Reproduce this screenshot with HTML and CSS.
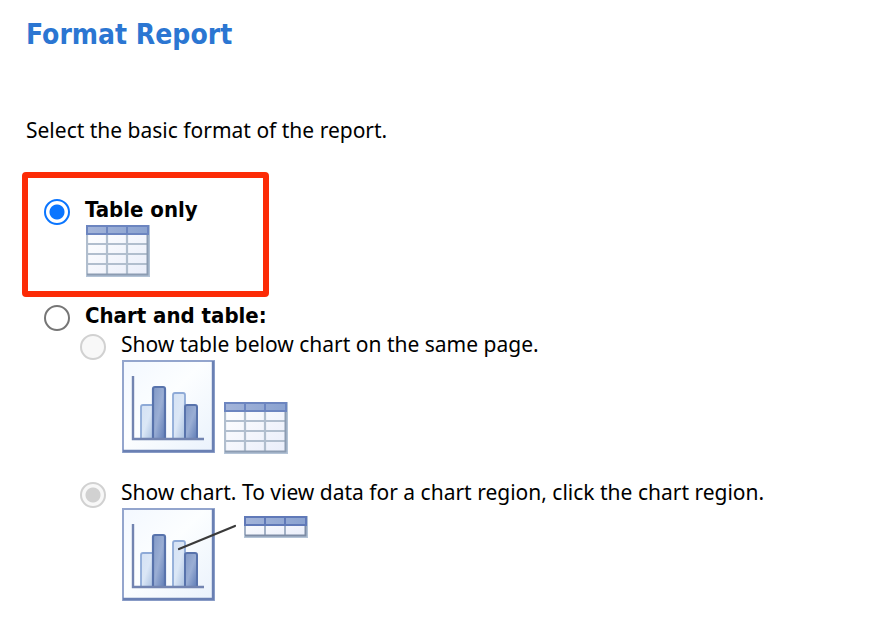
FILE: index.html
```html
<!DOCTYPE html>
<html lang="en">
<head>
  <meta charset="UTF-8" />
  <meta name="viewport" content="width=device-width, initial-scale=1.0"/>
  <title>Format Report</title>
  <link rel="stylesheet" href="styles.css">
</head>
<body>
  <svg class="defs" width="0" height="0" aria-hidden="true">
    <defs>
      <linearGradient id="paper" x1="0" y1="0" x2="1" y2="1">
        <stop offset="0" stop-color="#f3f8ff"/>
        <stop offset="0.45" stop-color="#fcfeff"/>
        <stop offset="1" stop-color="#eaf2fc"/>
      </linearGradient>
      <linearGradient id="cells" x1="0" y1="0" x2="1" y2="1">
        <stop offset="0" stop-color="#ffffff"/>
        <stop offset="1" stop-color="#eaeefa"/>
      </linearGradient>
      <linearGradient id="head" x1="0" y1="0" x2="1" y2="0">
        <stop offset="0" stop-color="#a3b4d9"/>
        <stop offset="1" stop-color="#8aa2d0"/>
      </linearGradient>
      <linearGradient id="lightBar" x1="0" y1="0" x2="1" y2="1">
        <stop offset="0" stop-color="#d5e2f4"/>
        <stop offset="0.5" stop-color="#dbe7f6"/>
        <stop offset="1" stop-color="#a9c0e0"/>
      </linearGradient>
      <linearGradient id="darkBar" x1="0" y1="0" x2="1" y2="1">
        <stop offset="0" stop-color="#8299c6"/>
        <stop offset="0.5" stop-color="#9aaed4"/>
        <stop offset="1" stop-color="#5f7cb6"/>
      </linearGradient>
    </defs>

    <symbol id="icon-chart" viewBox="0 0 94 94">
      <rect x="2" y="2" width="91" height="91" fill="#b9c3da"/>
      <rect x="1" y="1" width="91" height="91" fill="url(#paper)" stroke="#93a5cd" stroke-width="2"/>
      <path d="M91 1v90H1" fill="none" stroke="#6a80b3" stroke-width="2.4"/>
      <path d="M19 79V47q0-2 2-2h10v34z" fill="url(#lightBar)" stroke="#8eaad7" stroke-width="1.8"/>
      <path d="M31 79V29q0-2 2-2h8q2 0 2 2v50z" fill="url(#darkBar)" stroke="#5873ac" stroke-width="2.2"/>
      <path d="M51 79V35q0-2 2-2h8q2 0 2 2v44z" fill="url(#lightBar)" stroke="#8eaad7" stroke-width="1.8"/>
      <path d="M63 79V47q0-2 2-2h8q2 0 2 2v32z" fill="url(#darkBar)" stroke="#5873ac" stroke-width="2"/>
      <path d="M11 16v63h71" fill="none" stroke="#7284b1" stroke-width="2.4"/>
    </symbol>

    <symbol id="icon-table" viewBox="0 0 64 52">
      <rect width="64" height="52" fill="#b3c3d6"/>
      <rect x="1" y="1" width="60" height="48" fill="url(#cells)"/>
      <rect x="1" y="1" width="61" height="8" fill="url(#head)"/>
      <path d="M1 19h61M1 29h61M1 39h61M1 9v41M21 9v41M41 9v41" fill="none" stroke="#b1bece" stroke-width="2.2"/>
      <path d="M1 49.500h60.500V9" fill="none" stroke="#8c9cb2" stroke-width="2"/>
      <path d="M1 1h61v8H1zM21 1v8M41 1v8" fill="none" stroke="#6c85c0" stroke-width="2"/>
    </symbol>

    <symbol id="icon-row" viewBox="0 0 64 22">
      <rect width="64" height="22" fill="#b3c3d6"/>
      <rect x="1" y="1" width="60" height="18" fill="url(#cells)"/>
      <rect x="1" y="1" width="61" height="8" fill="url(#head)"/>
      <path d="M1 9v10M21 9v10M41 9v10" fill="none" stroke="#a3b1c6" stroke-width="2"/>
      <path d="M1 19.500h60.500V9" fill="none" stroke="#7e8da6" stroke-width="2"/>
      <path d="M1 1h61v8H1zM21 1v8M41 1v8" fill="none" stroke="#6079b8" stroke-width="2"/>
    </symbol>
  </svg>

  <form class="format">
    <h1>Format Report</h1>
    <p class="intro">Select the basic format of the report.</p>

    <div class="option highlight">
      <div class="choice main">
        <input type="radio" name="format" id="tableOnly" checked>
        <label for="tableOnly">Table only</label>
      </div>
      <div class="preview">
        <svg class="table-icon" aria-hidden="true"><use href="#icon-table"/></svg>
      </div>
    </div>

    <div class="option">
      <div class="choice main">
        <input type="radio" name="format" id="chartAndTable">
        <label for="chartAndTable">Chart and table:</label>
      </div>

      <div class="suboption">
        <div class="choice">
          <input type="radio" name="layout" id="tableBelow" disabled>
          <label for="tableBelow">Show table below chart on the same page.</label>
        </div>
        <div class="preview">
          <svg class="chart-icon" aria-hidden="true"><use href="#icon-chart"/></svg>
          <svg class="table-icon" aria-hidden="true"><use href="#icon-table"/></svg>
        </div>
      </div>

      <div class="suboption">
        <div class="choice">
          <input type="radio" name="layout" id="chartRegion" checked disabled>
          <label for="chartRegion">Show chart. To view data for a chart region, click the chart region.</label>
        </div>
        <div class="preview">
          <svg class="region-icon" viewBox="0 0 188 94" aria-hidden="true">
            <use href="#icon-chart" width="94" height="94"/>
            <use href="#icon-row" x="122" y="8" width="64" height="22"/>
            <path d="M57 41L113 18" stroke="#3a3a3a" stroke-width="2.2" stroke-linecap="round"/>
          </svg>
        </div>
      </div>
    </div>
  </form>
</body>
</html>
```
FILE: styles.css
```css
:root {
  --title: #2b76d2;
  --accent: #0a75ff;
  --highlight: #fc2b06;
}

body {
  font-family: Tahoma, 'Noto Sans', sans-serif;
  font-size: 21px;
  line-height: 26px;
  margin: 0;
  background-color: #fff;
  color: #000;
}

.defs {
  position: absolute;
}

.format {
  padding: 21px 22px;
}

h1 {
  margin: 0;
  padding-left: 4px;
  font-size: 28px;
  line-height: 28px;
  color: var(--title);
}

.intro {
  margin: 68px 0 29px;
  padding-left: 4px;
}

.option {
  padding-left: 22px;
}

.highlight {
  box-sizing: border-box;
  width: fit-content;
  min-width: 247px;
  margin-bottom: 6px;
  padding: 19px 16px 14px;
  border: 6px solid var(--highlight);
  border-radius: 4px;
}

.choice {
  display: flex;
  align-items: flex-start;
  gap: 15px;
  min-height: 28px;
}

.main label,
h1 {
  font-family: Tahoma, 'DejaVu Sans Condensed', sans-serif;
  font-weight: bold;
}

.main label {
  font-size: 22px;
}

.suboption {
  padding-left: 36px;
}

.suboption .choice {
  min-height: 29px;
}

.suboption + .suboption {
  margin-top: 25px;
}

.preview {
  display: flex;
  align-items: flex-end;
  gap: 8px;
  padding-left: 42px;
}

.chart-icon {
  width: 94px;
  height: 94px;
}

.table-icon {
  width: 64px;
  height: 52px;
}

.region-icon {
  width: 188px;
  height: 94px;
}

input[type="radio"] {
  appearance: none;
  box-sizing: border-box;
  flex: none;
  align-self: flex-end;
  width: 26px;
  height: 26px;
  margin: 0;
  border: 2px solid #767676;
  border-radius: 50%;
  background-color: #fff;
}

input[type="radio"]:checked {
  border-color: var(--accent);
  background: radial-gradient(circle, var(--accent) 7px, #fff 8px);
}

input[type="radio"]:disabled {
  border-color: #d1d1d1;
  background-color: #f8f8f8;
}

input[type="radio"]:disabled:checked {
  background: radial-gradient(circle, #d1d1d1 7px, #f8f8f8 8px);
}
```
